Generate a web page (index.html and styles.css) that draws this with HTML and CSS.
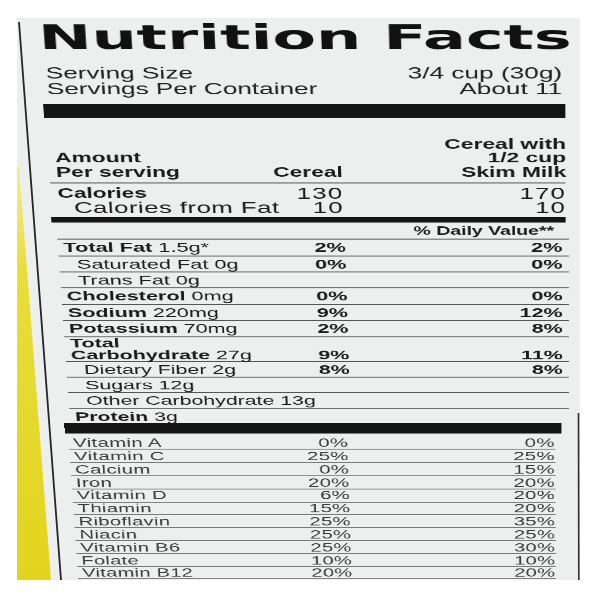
FILE: index.html
```html
<!DOCTYPE html>
<html lang="en">
<head>
<meta charset="utf-8">
<title>Nutrition Facts</title>
<link rel="stylesheet" href="styles.css">
</head>
<body>
<div class="photo">
  <svg class="edges" width="563" height="562" viewBox="0 0 563 562" aria-hidden="true">
    <defs>
      <linearGradient id="yel" x1="0" y1="0" x2="0" y2="1">
        <stop offset="0" stop-color="#f1ec9c"/>
        <stop offset="0.25" stop-color="#e9dd3a"/>
        <stop offset="1" stop-color="#e2d41e"/>
      </linearGradient>
    </defs>
    <polygon points="0,148 2,148 34,562 0,562" fill="url(#yel)"/>
    <line x1="2" y1="4" x2="44" y2="562" stroke="#262626" stroke-width="1.8"/>
    <line x1="561.5" y1="395" x2="561.8" y2="562" stroke="#2e2e2e" stroke-width="1.6"/>
  </svg>
  <div class="label">
    <header class="head">
      <h1 class="title">Nutrition Facts</h1>
      <div class="serv serv-first"><span>Serving Size</span><span>3/4 cup (30g)</span></div>
      <div class="serv"><span>Servings Per Container</span><span>About 11</span></div>
    </header>
    <div class="bar bar-top"></div>

    <section class="amount">
      <div class="colhead">
        <div class="c-name">Amount<br>Per serving</div>
        <div class="c-cereal">Cereal</div>
        <div class="c-milk">Cereal with<br>1/2 cup<br>Skim Milk</div>
      </div>
      <div class="crow crow-first">
        <div class="c-name"><b>Calories</b></div>
        <div class="c-cereal num">130</div>
        <div class="c-milk num">170</div>
      </div>
      <div class="crow">
        <div class="c-name fromfat">Calories from Fat</div>
        <div class="c-cereal num">10</div>
        <div class="c-milk num">10</div>
      </div>
    </section>
    <div class="bar bar-mid"></div>

    <section class="nutrients">
      <div class="dv">% Daily Value**</div>
      <div class="nrow"><span class="n-name"><b>Total Fat</b> 1.5g*</span><span class="n-c">2%</span><span class="n-m">2%</span></div>
      <div class="nrow"><span class="n-name sub">Saturated Fat 0g</span><span class="n-c">0%</span><span class="n-m">0%</span></div>
      <div class="nrow"><span class="n-name sub">Trans Fat 0g</span><span class="n-c"></span><span class="n-m"></span></div>
      <div class="nrow"><span class="n-name"><b>Cholesterol</b> 0mg</span><span class="n-c">0%</span><span class="n-m">0%</span></div>
      <div class="nrow"><span class="n-name"><b>Sodium</b> 220mg</span><span class="n-c">9%</span><span class="n-m">12%</span></div>
      <div class="nrow"><span class="n-name"><b>Potassium</b> 70mg</span><span class="n-c">2%</span><span class="n-m">8%</span></div>
      <div class="nrow nrow-double"><span class="n-name"><b>Total<br>Carbohydrate</b> 27g</span><span class="n-c">9%</span><span class="n-m">11%</span></div>
      <div class="nrow"><span class="n-name sub">Dietary Fiber 2g</span><span class="n-c">8%</span><span class="n-m">8%</span></div>
      <div class="nrow"><span class="n-name sub">Sugars 12g</span><span class="n-c"></span><span class="n-m"></span></div>
      <div class="nrow"><span class="n-name sub">Other Carbohydrate 13g</span><span class="n-c"></span><span class="n-m"></span></div>
      <div class="nrow nrow-last"><span class="n-name"><b>Protein</b> 3g</span><span class="n-c"></span><span class="n-m"></span></div>
    </section>
    <div class="bar bar-low"></div>

    <section class="vitamins">
      <div class="vrow"><span>Vitamin A</span><span class="v-c">0%</span><span class="v-m">0%</span></div>
      <div class="vrow"><span>Vitamin C</span><span class="v-c">25%</span><span class="v-m">25%</span></div>
      <div class="vrow"><span>Calcium</span><span class="v-c">0%</span><span class="v-m">15%</span></div>
      <div class="vrow"><span>Iron</span><span class="v-c">20%</span><span class="v-m">20%</span></div>
      <div class="vrow"><span>Vitamin D</span><span class="v-c">6%</span><span class="v-m">20%</span></div>
      <div class="vrow"><span>Thiamin</span><span class="v-c">15%</span><span class="v-m">20%</span></div>
      <div class="vrow"><span>Riboflavin</span><span class="v-c">25%</span><span class="v-m">35%</span></div>
      <div class="vrow"><span>Niacin</span><span class="v-c">25%</span><span class="v-m">25%</span></div>
      <div class="vrow"><span>Vitamin B6</span><span class="v-c">25%</span><span class="v-m">30%</span></div>
      <div class="vrow"><span>Folate</span><span class="v-c">10%</span><span class="v-m">10%</span></div>
      <div class="vrow"><span>Vitamin B12</span><span class="v-c">20%</span><span class="v-m">20%</span></div>
    </section>
  </div>
</div>
</body>
</html>
```
FILE: styles.css
```css
* { box-sizing: border-box; }
html, body { margin: 0; padding: 0; background: #ffffff; }
body { width: 600px; height: 600px; overflow: hidden; }

.photo {
  position: relative;
  width: 563px;
  height: 562px;
  margin: 18px 0 0 17px;
  background: #edefee;
  overflow: hidden;
}
.edges { position: absolute; left: 0; top: 0; }

/* the label is laid out flat, then put in the photo's perspective */
.label {
  position: relative;
  width: 327.5px;
  margin: 2px 0 0 25px;
  transform-origin: 0 0;
  transform: matrix3d(1.6, 0, 0, 0, 0.07, 1, 0, 0.00013, 0, 0, 1, 0, 0, 0, 0, 1);
  font-family: "Liberation Sans", Arial, sans-serif;
  color: #1b1b1b;
}

.title {
  margin: 0 0 0 -2.6px;
  font-family: "DejaVu Sans", sans-serif;
  font-weight: 700;
  font-size: 34px;
  line-height: 34px;
  white-space: nowrap;
  color: #111;
  transform: scaleX(1.17);
  transform-origin: 0 0;
}
.serv {
  display: flex;
  justify-content: space-between;
  width: 325px;
  font-size: 16.5px;
  line-height: 15.7px;
  color: #222;
  white-space: nowrap;
}
.serv-first { margin-top: 12.1px; }

.bar { background: #151515; }
.bar-top { height: 14.34px; width: 330.8px; margin: 7.25px 0 0 -3.4px; }
.bar-mid { height: 6.33px; width: 329.9px; margin: 2.1px 0 0 -3.2px; }
.bar-low { height: 12.27px; width: 327.4px; margin-left: -3.7px; }

/* amount / calories */
.amount { width: 329px; margin-left: -1.6px; padding-top: 19.54px; }
.colhead, .crow {
  display: grid;
  grid-template-columns: 122.9px 60px 1fr;
  padding-left: 3.7px;
  white-space: nowrap;
}
.colhead {
  align-items: end;
  padding-bottom: 4.16px;
  border-bottom: 1px solid #4a4a4a;
  font-weight: 700;
  font-size: 14.5px;
  line-height: 14.52px;
}
.crow { font-size: 14.5px; line-height: 14.7px; }
.crow-first { margin-top: 3.14px; }
.c-cereal, .c-milk { text-align: right; }
.num { font-size: 16.5px; letter-spacing: 0.8px; }
.fromfat { font-size: 16.5px; padding-left: 10px; letter-spacing: 0.3px; }

/* nutrients */
.nutrients { width: 329px; }
.dv {
  margin-top: 3.17px;
  padding-right: 9.4px;
  text-align: right;
  font-weight: 700;
  font-size: 12.5px;
  line-height: 13.8px;
  border-bottom: 1px solid #4a4a4a;
}
.nrow {
  display: grid;
  grid-template-columns: 122px 60px 1fr;
  height: 17.4px;
  padding: 1px 4px 0 3.5px;
  font-size: 14px;
  line-height: 15.4px;
  border-bottom: 1px solid #555;
  white-space: nowrap;
}
.nrow-double { height: 27px; padding-top: 0; line-height: 13px; align-items: end; }
.nrow-last { height: 15.2px; border-bottom: 0; }
.n-name.sub { padding-left: 8px; }
.n-c, .n-m { text-align: right; font-weight: 700; }

/* vitamins */
.vitamins { width: 321.6px; margin-left: -2px; padding-top: 3.36px; }
.vrow {
  display: grid;
  grid-template-columns: 122px 60px 1fr;
  height: 14.82px;
  padding: 0.7px 0 0 3px;
  font-size: 13.5px;
  line-height: 13.12px;
  letter-spacing: 0.2px;
  color: #3a3a3a;
  border-bottom: 1px solid #7a7a7a;
  white-space: nowrap;
}
.v-c, .v-m { text-align: right; }
```
